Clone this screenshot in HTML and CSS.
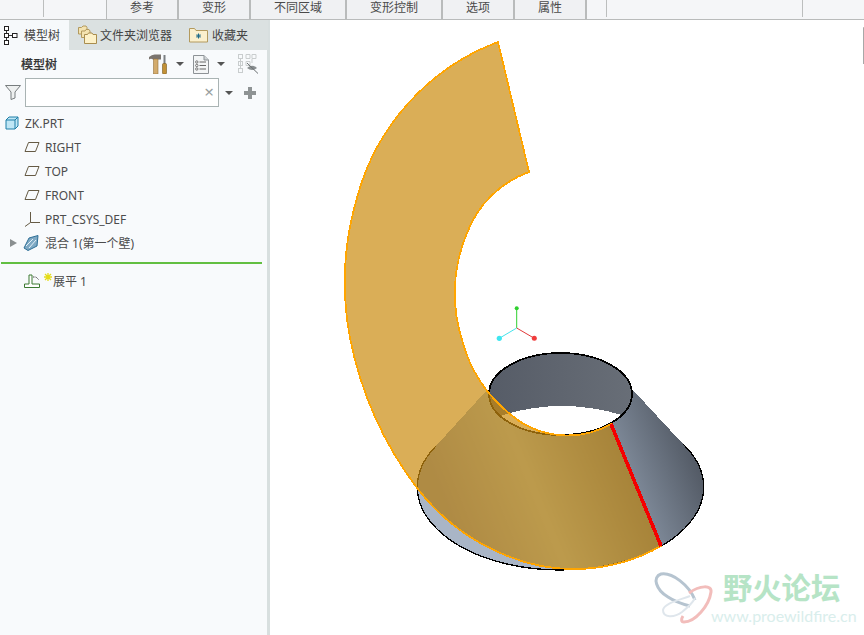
FILE: index.html
```html
<!DOCTYPE html>
<html lang="zh">
<head>
<meta charset="utf-8">
<title>模型树</title>
<link rel="stylesheet" href="styles.css">
</head>
<body>
<div class="app">
  <header class="toolbar">
    <span class="stub stub-a"></span>
    <nav class="dash-tabs">
      <span class="dash-tab w72">参考</span>
      <span class="dash-tab w72">变形</span>
      <span class="dash-tab w96">不同区域</span>
      <span class="dash-tab w96">变形控制</span>
      <span class="dash-tab w72">选项</span>
      <span class="dash-tab w72">属性</span>
    </nav>
    <span class="stub stub-b"></span>
    <span class="stub stub-c"></span>
  </header>
  <main class="main">
    <aside class="sidebar">
      <div class="tabs">
        <div class="tab tab-active">
          <svg class="ic-tree" viewBox="0 0 14 19" width="14" height="19"><path d="M2.500 4.500V14.500M4.500 9.500H9" stroke="#333" fill="none"/><g fill="#fff" stroke="#222"><rect x=".5" y=".5" width="4" height="4"/><rect x=".5" y="7.500" width="4" height="4"/><rect x=".5" y="14.500" width="4" height="4"/><rect x="8.500" y="7.500" width="4.500" height="4"/></g></svg>
          <span>模型树</span>
        </div>
        <div class="tab tab-files">
          <svg viewBox="0 0 20 20" width="20" height="20"><g stroke="#b39a5e" fill="#f4e3b0"><path d="M1.500 9V2.500H4.500L6 1H9L10 2.500V9Z"/><path d="M4.500 12.500V6H8L9 4.500H12L13 6V12.500Z"/></g><path d="M7.500 18.500V9.500H10.500L11.500 8H15L16 9.500H19.500V18.500Z" fill="#fdf1c8" stroke="#a98d4e"/></svg>
          <span>文件夹浏览器</span>
        </div>
        <div class="tab tab-favs">
          <svg viewBox="0 0 19 16" width="19" height="16"><path d="M.5 15V1.500H5.500L7 3.500H18.500V15Z" fill="#fbf0cd" stroke="#b39a5e"/><path d="M9.500 6.500V11.500M7 9H12M7.800 7.300 11.200 10.700M11.200 7.300 7.800 10.700" stroke="#1d6a88" stroke-width="1"/></svg>
          <span>收藏夹</span>
        </div>
      </div>
      <div class="panel">
        <div class="panel-head">
          <span class="panel-title">模型树</span>
          <svg class="ic-tools" viewBox="0 0 20 20" width="20" height="20"><path d="M0 3Q3 .3 6 .5H12V5.500H4Q2 4 0 5.500Z" fill="#7b756f"/><rect x="4.500" y="5" width="4.500" height="15" fill="#d3ab6c" stroke="#94733f" stroke-width=".6"/><rect x="14.500" y="1" width="2" height="9" fill="#7b7f82"/><rect x="13.500" y="9.500" width="4" height="10.500" rx="1" fill="#c29137" stroke="#7a5a20" stroke-width=".6"/></svg>
          <span class="caret caret-a"></span>
          <svg class="ic-doc" viewBox="0 0 16 19" width="16" height="19"><path d="M.5.5H11L15.500 5V18.500H.5Z" fill="#f3f5f6" stroke="#8d9296"/><path d="M11 .5V5H15.500" fill="#cfd3d6" stroke="#8d9296"/><g fill="#fff" stroke="#555" stroke-width=".8"><circle cx="3.800" cy="7" r="1.200"/><circle cx="3.800" cy="10.500" r="1.200"/><circle cx="3.800" cy="14" r="1.200"/></g><path d="M6.500 7H13M6.500 10.500H13M6.500 14H13" stroke="#666"/></svg>
          <span class="caret caret-b"></span>
          <svg class="ic-hide" viewBox="0 0 21 20" width="21" height="20"><g fill="none" stroke="#c9cdce"><rect x=".5" y=".5" width="4" height="4"/><rect x=".5" y="7.500" width="4" height="4"/><rect x=".5" y="14.500" width="4" height="4"/><path d="M8 .5H12V4.500H8ZM14 .5H18V4.500H14ZM8 7.500H12V11.500H8ZM14 5V9M2.500 4.500V14.500"/></g><path d="M9 14Q14 9.500 19 14Q14 18 9 14Z" fill="#8a8f91"/><path d="M9 9 20 19.500" stroke="#6a6f71"/></svg>
        </div>
        <div class="filter-row">
          <svg class="ic-funnel" viewBox="0 0 16 15" width="16" height="15"><path d="M.5.5H15.500L10 7V13L6 14.500V7Z" fill="#eef0f0" stroke="#777c7e"/></svg>
          <div class="search"><span class="clear">×</span></div>
          <span class="caret caret-c"></span>
          <span class="plus"></span>
        </div>
        <ul class="tree">
          <li class="row row-root">
            <svg viewBox="0 0 14 14" width="14" height="14"><path d="M1 4 4 1H13V10L10 13H1Z" fill="#bfe6f5" stroke="#1f7fa8"/><path d="M1 4H10V13M10 4 13 1" fill="none" stroke="#1f7fa8"/></svg>
            <span>ZK.PRT</span>
          </li>
          <li class="row">
            <svg viewBox="0 0 16 12" width="16" height="12"><path d="M4.500 1.500H15L11.500 10.500H1Z" fill="none" stroke="#655a44"/></svg>
            <span>RIGHT</span>
          </li>
          <li class="row">
            <svg viewBox="0 0 16 12" width="16" height="12"><path d="M4.500 1.500H15L11.500 10.500H1Z" fill="none" stroke="#655a44"/></svg>
            <span>TOP</span>
          </li>
          <li class="row">
            <svg viewBox="0 0 16 12" width="16" height="12"><path d="M4.500 1.500H15L11.500 10.500H1Z" fill="none" stroke="#655a44"/></svg>
            <span>FRONT</span>
          </li>
          <li class="row">
            <svg viewBox="0 0 16 16" width="16" height="16"><path d="M6.500 1V11.500H16M6.500 11.500 1 15.500" fill="none" stroke="#655a44"/></svg>
            <span>PRT_CSYS_DEF</span>
          </li>
          <li class="row row-feature">
            <span class="expander"></span>
            <svg viewBox="0 0 16 16" width="16" height="16"><path d="M1 13 6 3 15 .5 14 11 5 15.500Z" fill="#7fa9c4" stroke="#2e6f96"/><path d="M3 11 10 4M6 13 13 5" stroke="#e4f1f8"/></svg>
            <span>混合 1(第一个壁)</span>
          </li>
        </ul>
        <div class="insert-line"></div>
        <div class="row row-flat">
          <svg viewBox="0 0 16 14" width="16" height="14"><path d="M.5 13.500H15.500V10H8V1H5V10H.5Z" fill="#fff" stroke="#3c7a32"/><path d="M9 3H12L15 6" fill="none" stroke="#444" stroke-dasharray="1.500 1"/></svg>
          <svg class="ic-new" viewBox="0 0 8 8" width="8" height="8"><path d="M4 0V8M0 4H8M1 1 7 7M7 1 1 7" stroke="#e4dc18" stroke-width="1.300"/></svg>
          <span>展平 1</span>
        </div>
      </div>
    </aside>
    <section class="canvas">
      <svg class="scene" viewBox="270 20 594 615" width="594" height="615">
        <defs>
          <linearGradient id="cone" gradientUnits="userSpaceOnUse" x1="440" y1="490" x2="672" y2="395">
            <stop offset="0" stop-color="rgb(112,137,192)"/>
            <stop offset=".35" stop-color="rgb(155,189,218)"/>
            <stop offset=".73" stop-color="rgb(85,113,155)"/>
            <stop offset=".732" stop-color="rgb(124,135,150)"/>
            <stop offset="1" stop-color="rgb(82,89,100)"/>
          </linearGradient>
          <linearGradient id="inner" x1="0" x2="1" y1="0" y2="0">
            <stop offset="0" stop-color="#565c67"/>
            <stop offset="1" stop-color="#686e77"/>
          </linearGradient>
        </defs>
        <path d="M863.500 64V27.500H864" class="corner"/>
        <g class="shapes">
          <path d="M486 391 436 446A143 83 0 0 0 560.500 570A143 83 0 0 0 683 444L632 389Z" fill="url(#cone)"/>
          <path d="M417 488A143 83 0 0 0 560 570L510 557A214 214 0 0 1 417 488Z" fill="#a9b5c6"/>
          <path d="M436 446A143 83 0 0 0 560.500 570A143 83 0 0 0 683 444" class="edge"/>
          <ellipse cx="560.500" cy="394" rx="71.500" ry="41" fill="url(#inner)"/>
          <path d="M500 416Q560 396.500 622 415A71.500 41 0 0 1 500 416Z" fill="#fff"/>
          <ellipse cx="560.500" cy="394" rx="71.500" ry="41" class="edge edge-top"/>
          <path class="sheet" d="M498 42A230 230 0 0 0 357 198A300 300 0 0 0 350 338A370 370 0 0 0 417 488A214 214 0 0 0 510 557A176 176 0 0 0 661 546L611 424A88 88 0 0 1 510 414A142 142 0 0 1 462 340A155 155 0 0 1 467 233A104 104 0 0 1 529 172Z"/>
          <path d="M611 424 661 546" class="bend"/>
        </g>
        <g class="triad">
          <path d="M516.700 328V308" stroke="#2fd02f"/>
          <path d="M516.700 328 499.300 338.300" stroke="#45e4ec"/>
          <path d="M516.700 328 534.300 338.300" stroke="#e23a3a"/>
          <circle cx="516.700" cy="308.300" r="2" fill="#2fd02f"/>
          <circle cx="499.300" cy="338.300" r="2.600" fill="#3fe6f0"/>
          <circle cx="534.300" cy="338.300" r="2.500" fill="#f03c3c"/>
        </g>
        <g class="mark" fill="none">
          <path d="M695 600C689 585 672 572 661 574C652 577 656 590 668 597C674 601 682 604 690 606" stroke="#b6c4d0" stroke-width="3"/>
          <path d="M689 593C700 585 712 585 711 592C709 606 695 622 684 622C681 622 681 619 683 616" stroke="#f2bdbb" stroke-width="3"/>
          <path d="M690 596C680 600 664 603 663 610C663 618 674 618 682 612C687 608 692 604 695 598" stroke="#dfe6ec" stroke-width="2"/>
        </g>
        <text x="723" y="599" class="mark-cn">野火论坛</text>
        <text x="711" y="622" class="mark-url">www.proewildfire.cn</text>
      </svg>
    </section>
  </main>
</div>
</body>
</html>
```
FILE: styles.css
```css
* { box-sizing: border-box; }
html, body { margin: 0; padding: 0; }
body {
  width: 864px;
  height: 635px;
  overflow: hidden;
  background: #fff;
  font-family: "Noto Sans", "Noto Sans CJK SC", sans-serif;
  font-size: 12px;
  color: #4a4a4a;
}
.app { display: flex; flex-direction: column; height: 635px; }

.toolbar {
  position: relative;
  flex: 0 0 20px;
  display: flex;
  padding-left: 106px;
  background: #f5f6f8;
  border-bottom: 1px solid #b9bbbb;
}
.dash-tabs { display: flex; border-left: 1px solid #b9bbbb; }
.dash-tab {
  display: flex;
  align-items: center;
  justify-content: center;
  height: 19px;
  padding-bottom: 3px;
  background: #f0f1f3;
  border-right: 2px solid #b9bbbb;
  font-size: 12px;
  line-height: 14px;
  color: #4a4a4a;
}
.w72 { width: 72px; }
.w96 { width: 96px; }
.stub { position: absolute; top: 0; width: 1px; height: 17px; background: #bcbebe; }
.stub-a { left: 43px; }
.stub-b { left: 606px; }
.stub-c { left: 802px; }

.main { flex: 1; display: flex; min-height: 0; }
.sidebar {
  flex: 0 0 270px;
  display: flex;
  flex-direction: column;
  background: #f8fafc;
  border-right: 3px solid #d8dfdf;
}
.tabs { flex: 0 0 30px; display: flex; background: #dbe1e1; margin-right: -1px; }
.tab { display: flex; align-items: center; font-size: 12px; color: #444; }
.tab-active { width: 69px; padding-left: 4px; gap: 6px; background: #f6f9fb; }
.tab-files { width: 120px; padding-left: 8px; gap: 3px; }
.tab-favs { gap: 4px; }
.panel { flex: 1; display: flex; flex-direction: column; }
.panel-head { position: relative; height: 27px; display: flex; align-items: center; padding-left: 21px; }
.panel-title { font-size: 12px; font-weight: 500; color: #333; width: 128px; -webkit-text-stroke: .2px #333; }
.ic-tools { margin-top: 1px; }
.caret {
  width: 0;
  height: 0;
  border-left: 4px solid transparent;
  border-right: 4px solid transparent;
  border-top: 4px solid #555;
}
.caret-a { margin-left: 7px; }
.ic-doc { margin-left: 9px; margin-top: 1px; }
.caret-b { margin-left: 8px; }
.ic-hide { margin-left: 13px; margin-top: 1px; }
.filter-row { height: 29px; display: flex; align-items: center; padding-left: 5px; margin-top: 1px; }
.ic-funnel { margin-right: 4px; }
.search {
  position: relative;
  width: 194px;
  height: 29px;
  background: #fff;
  border: 1px solid #a9b3b3;
}
.clear { position: absolute; right: 4px; top: 4px; font-size: 17px; line-height: 18px; color: #9a9fa0; }
.caret-c { margin-left: 6px; }
.plus {
  margin-left: 11px;
  width: 12px;
  height: 12px;
  background:
    linear-gradient(#8e9394, #8e9394) center / 12px 4px no-repeat,
    linear-gradient(#8e9394, #8e9394) center / 4px 12px no-repeat;
}
.tree { list-style: none; margin: 4px 0 0; padding: 0; }
.row { height: 24px; display: flex; align-items: center; gap: 5px; padding-left: 24px; font-size: 12px; color: #4c4c4c; white-space: nowrap; }
.row-root { padding-left: 5px; gap: 6px; }
.row-feature { padding-left: 10px; gap: 6px; }
.expander {
  width: 0;
  height: 0;
  border-top: 4px solid transparent;
  border-bottom: 4px solid transparent;
  border-left: 7px solid #8a8f90;
}
.insert-line { height: 2px; width: 261px; margin: 7px 0 0 1px; background: #62bf41; }
.row-flat { margin-top: 5px; gap: 4px; }
.ic-new { margin-bottom: 8px; margin-right: -3px; }

.canvas { flex: 1; min-width: 0; background: #fff; }
.scene { display: block; }
.shapes { shape-rendering: crispEdges; }
.corner { fill: none; stroke: #a8a8a8; stroke-width: 1; }
.edge { fill: none; stroke: #000; stroke-width: 1.300; }
.edge-top { stroke-width: 1.700; }
.sheet { fill: rgba(203, 139, 16, .7); stroke: #ffa500; stroke-width: 1.800; stroke-linejoin: miter; }
.bend { stroke: #f40000; stroke-width: 3.600; fill: none; }
.triad path { stroke-width: 1; fill: none; }
.mark-cn { font-family: "Noto Sans CJK SC", sans-serif; font-size: 29.300px; font-weight: 700; fill: #b6e4c6; }
.mark-url { font-family: "Lato", sans-serif; font-size: 16px; fill: #d9eeec; }
```
